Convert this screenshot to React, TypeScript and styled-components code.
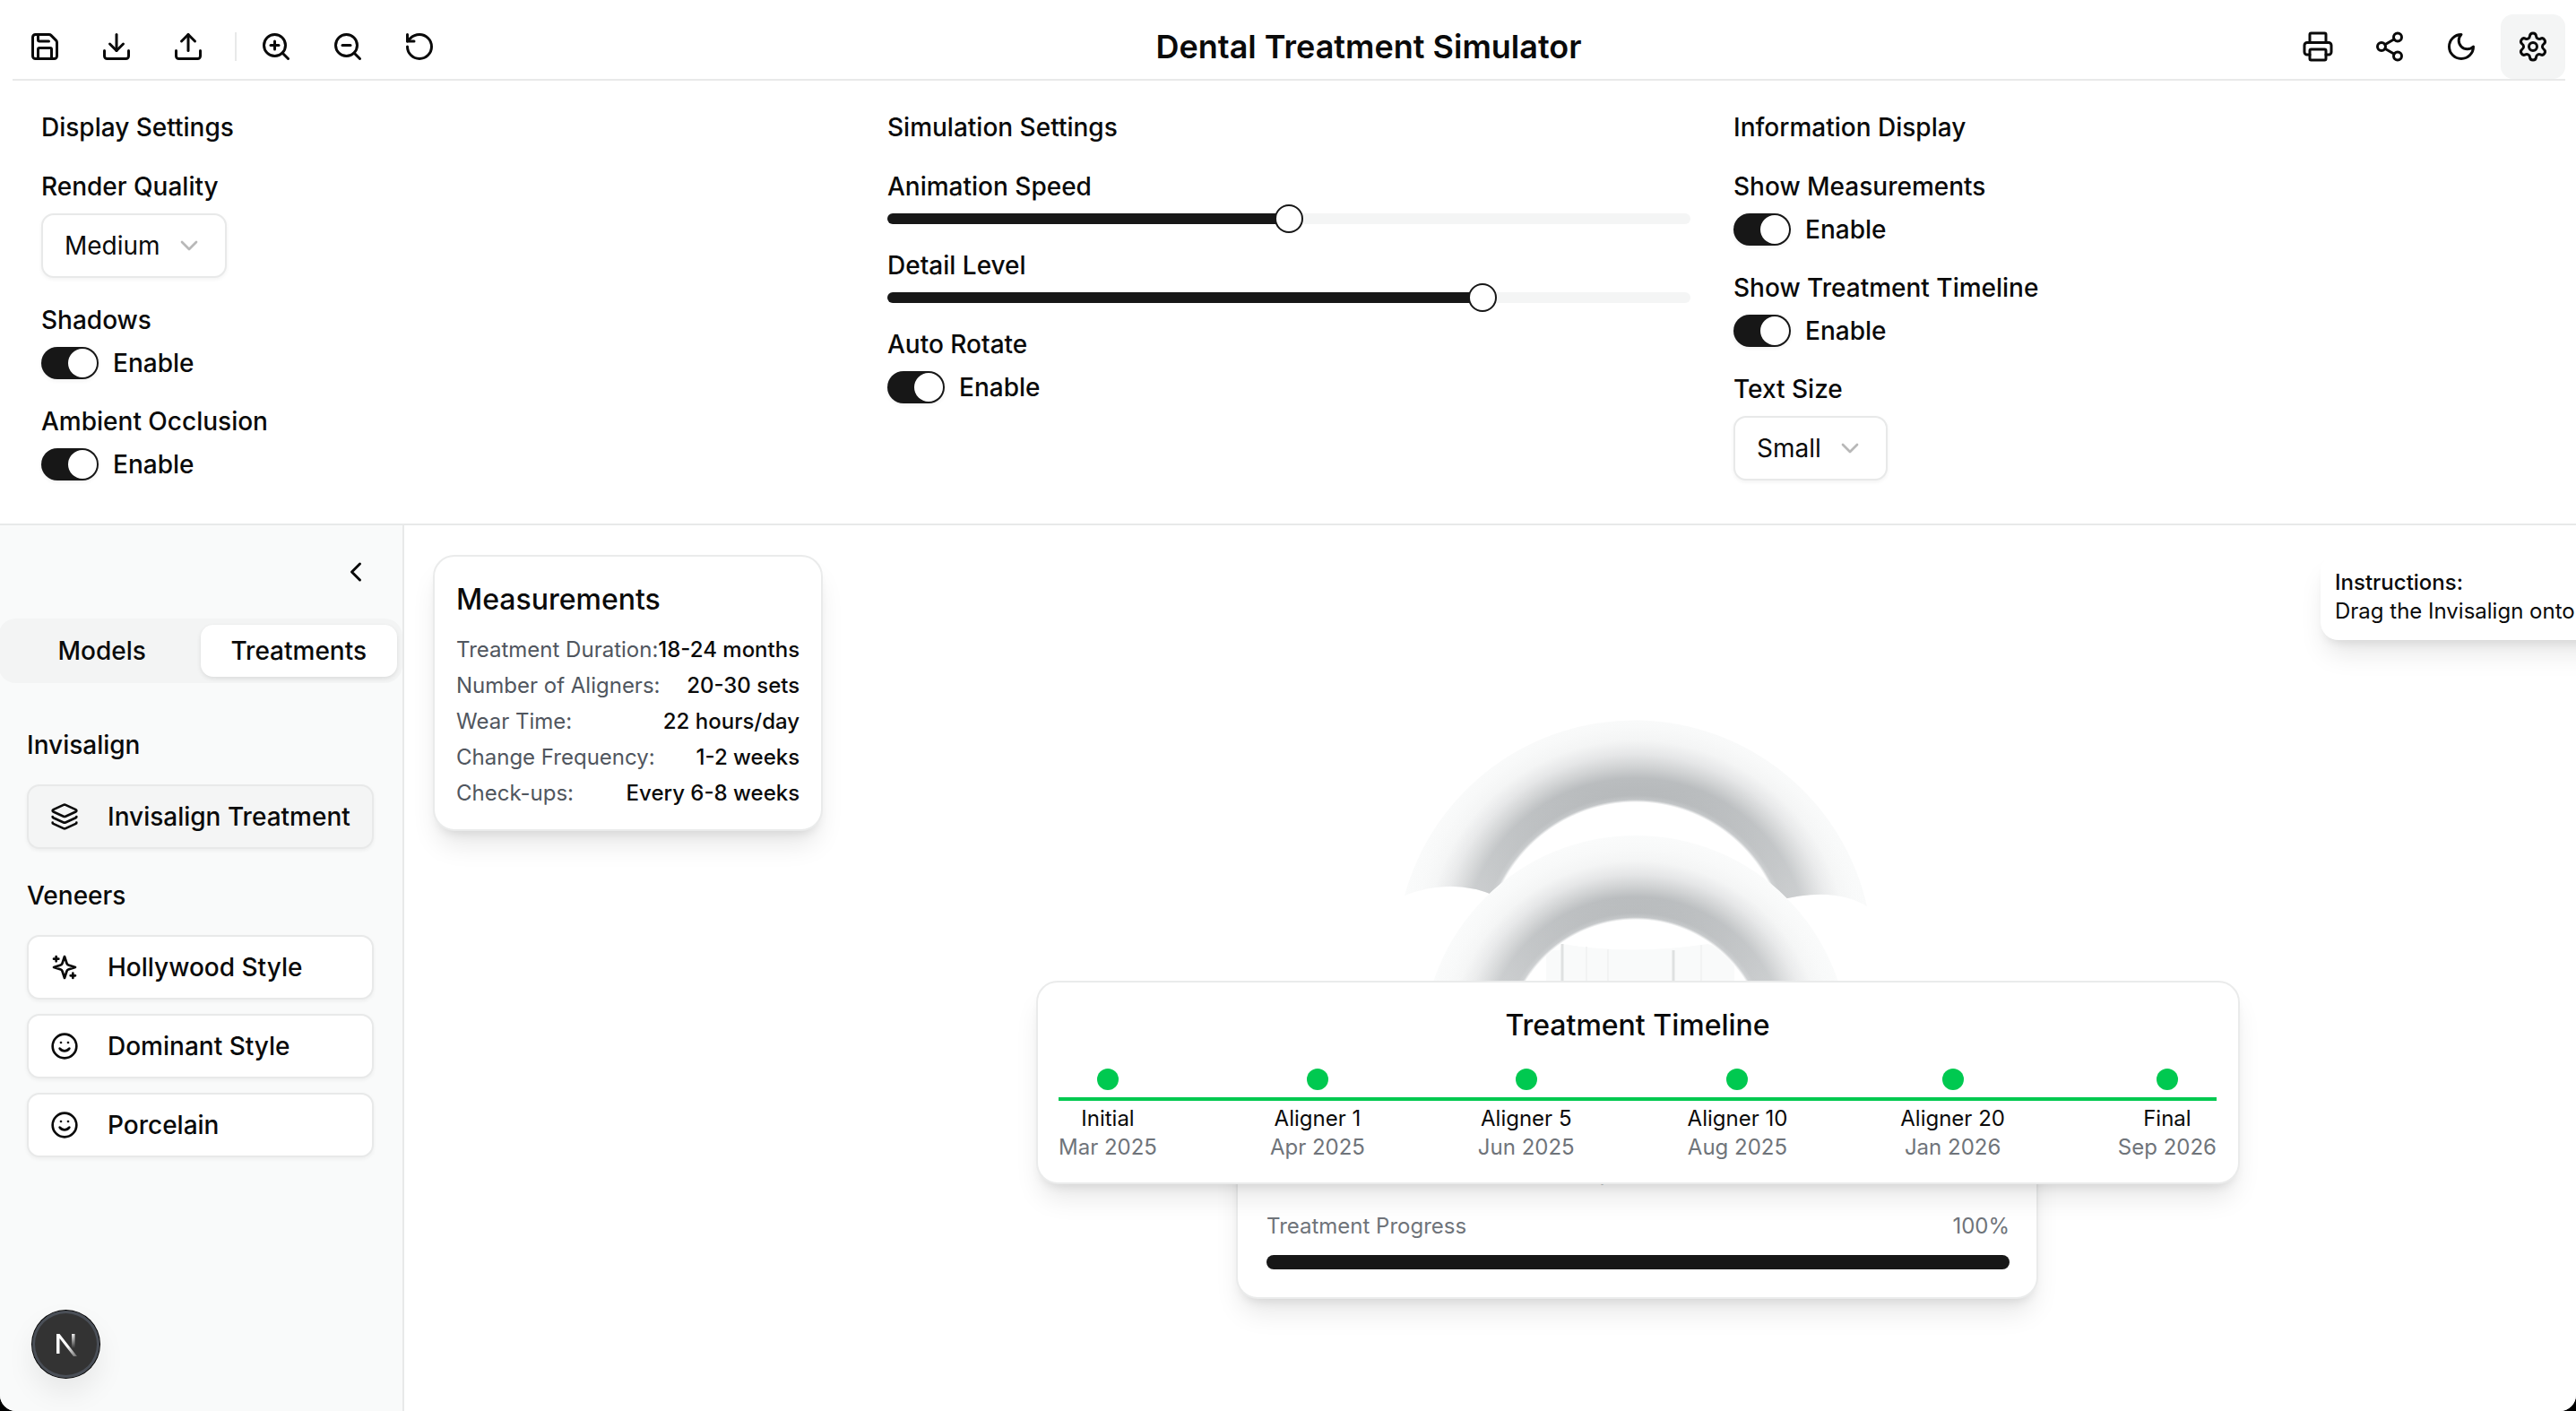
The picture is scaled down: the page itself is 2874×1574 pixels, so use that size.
import React from 'react';
import styled, { createGlobalStyle } from 'styled-components';
import {
  ChevronDown,
  ChevronLeft,
  Download,
  Layers,
  Printer,
  RotateCcw,
  Save,
  Settings,
  Share2,
  Smile,
  Upload,
  ZoomIn,
  ZoomOut,
} from 'lucide-react';

const GlobalStyle = createGlobalStyle`
  html, body {
    margin: 0;
    padding: 0;
    background: #000;
  }
  * {
    box-sizing: border-box;
  }
`;

const Page = styled.div`
  width: 2874px;
  height: 1574px;
  display: flex;
  flex-direction: column;
  overflow: hidden;
  position: relative;
  background: #fff;
  border-radius: 0 0 18px 18px;
  font-family: Inter, 'Noto Sans', sans-serif;
  font-size: 28px;
  line-height: 40px;
  color: #0a0a0a;
`;

const Header = styled.header`
  flex: none;
  height: 90px;
  margin: 0 12px 0 14px;
  padding-top: 16px;
  display: flex;
  align-items: center;
  justify-content: space-between;
  border-bottom: 2px solid #e8e9e9;
`;

const ToolGroup = styled.div`
  display: flex;
  align-items: center;
  gap: 8px;
`;

const ToolButton = styled.button<{ $active?: boolean }>`
  width: 72px;
  height: 72px;
  padding: 0;
  display: flex;
  align-items: center;
  justify-content: center;
  border: none;
  border-radius: 14px;
  color: #0a0a0a;
  background: ${(p) => (p.$active ? '#f4f5f5' : 'transparent')};
`;

const ToolDivider = styled.div`
  width: 2px;
  height: 32px;
  margin-left: 8px;
  background: #e8e9e9;
`;

const Title = styled.h1`
  margin: 0;
  font-size: 36px;
  line-height: 48px;
  font-weight: 600;
`;

const SettingsPanel = styled.section`
  flex: none;
  height: 496px;
  padding: 32px 44px 0 46px;
  display: grid;
  grid-template-columns: repeat(3, 1fr);
  column-gap: 48px;
  align-items: start;
  border-bottom: 2px solid #e8e9e9;
`;

const SettingsColumn = styled.div`
  display: flex;
  flex-direction: column;
  gap: 26px;
`;

const ColumnTitle = styled.h3`
  margin: 0 0 -1px;
  font-size: 28px;
  line-height: 40px;
  font-weight: 500;
`;

const Field = styled.div`
  display: flex;
  flex-direction: column;
  align-items: flex-start;
  gap: 9px;
`;

const FieldLabel = styled.label`
  line-height: 42px;
  font-weight: 500;
`;

const SelectBox = styled.div`
  height: 72px;
  padding: 0 24px;
  display: flex;
  align-items: center;
  gap: 16px;
  background: #fff;
  border: 2px solid #e8e9e9;
  border-radius: 14px;
  box-shadow: 0 2px 4px rgba(0, 0, 0, 0.05);
  svg {
    opacity: 0.5;
    color: #737373;
  }
`;

const ToggleRow = styled.div`
  display: flex;
  align-items: center;
  gap: 16px;
  height: 36px;
  font-weight: 500;
`;

const ToggleTrack = styled.span`
  width: 64px;
  height: 36px;
  padding: 2px;
  display: flex;
  justify-content: flex-end;
  border-radius: 18px;
  background: #171717;
  box-shadow: 0 2px 4px rgba(0, 0, 0, 0.05);
`;

const ToggleThumb = styled.span`
  width: 32px;
  height: 32px;
  border-radius: 50%;
  background: #fff;
`;

const SliderTrack = styled.div`
  position: relative;
  width: 100%;
  height: 12px;
  margin-bottom: -1px;
  border-radius: 6px;
  background: #f4f5f5;
`;

const SliderRange = styled.div<{ $value: number }>`
  height: 100%;
  width: calc((100% - 32px) * ${(p) => p.$value} + 16px);
  border-radius: 6px 0 0 6px;
  background: #171717;
`;

const SliderThumb = styled.span<{ $value: number }>`
  position: absolute;
  top: -10px;
  left: calc((100% - 32px) * ${(p) => p.$value});
  width: 32px;
  height: 32px;
  border-radius: 50%;
  background: #fff;
  border: 2px solid #171717;
`;

const Workspace = styled.main`
  flex: 1;
  min-height: 0;
  display: flex;
`;

const Sidebar = styled.aside`
  flex: none;
  width: 451px;
  padding-top: 16px;
  background: #f9fafa;
  border-right: 2px solid #e8e9e9;
`;

const CollapseRow = styled.div`
  height: 72px;
  padding-right: 16px;
  display: flex;
  justify-content: flex-end;
`;

const CollapseButton = styled.button`
  width: 72px;
  height: 72px;
  padding: 0;
  display: flex;
  align-items: center;
  justify-content: center;
  border: none;
  background: transparent;
  color: #0a0a0a;
`;

const TabList = styled.div`
  width: 451px;
  height: 72px;
  margin: 16px 0 0 -2px;
  padding: 7px 6px;
  display: grid;
  grid-template-columns: 1fr 1fr;
  border-radius: 20px;
  background: #f3f4f4;
`;

const Tab = styled.div<{ $active?: boolean }>`
  display: flex;
  align-items: center;
  justify-content: center;
  font-weight: 500;
  border-radius: 14px;
  background: ${(p) => (p.$active ? '#fff' : 'transparent')};
  box-shadow: ${(p) => (p.$active ? '0 2px 5px rgba(0, 0, 0, 0.1)' : 'none')};
`;

const TreatmentList = styled.div`
  padding: 49px 32px 0 30px;
`;

const GroupLabel = styled.h4<{ $spaced?: boolean }>`
  margin: ${(p) => (p.$spaced ? '32px' : '0')} 0 24px;
  font-size: 28px;
  line-height: 40px;
  font-weight: 500;
`;

const GroupItems = styled.div`
  display: flex;
  flex-direction: column;
  gap: 16px;
`;

const TreatmentItem = styled.div<{ $active?: boolean }>`
  height: 72px;
  padding-left: 24px;
  display: flex;
  align-items: center;
  gap: 32px;
  font-weight: 500;
  border: 2px solid #e8e9e9;
  border-radius: 14px;
  background: ${(p) => (p.$active ? '#f4f5f5' : '#fff')};
  box-shadow: 0 2px 4px rgba(0, 0, 0, 0.05);
`;

const Canvas = styled.div`
  position: relative;
  flex: 1;
  min-width: 0;
  overflow: hidden;
  background: #fff;
`;

const ArchDrawing = styled.svg`
  position: absolute;
  left: 849px;
  top: 174px;
`;

const FloatingCard = styled.div`
  position: absolute;
  background: #fff;
  border: 2px solid #eaebeb;
  border-radius: 24px;
  box-shadow: 0 20px 30px -6px rgba(0, 0, 0, 0.1), 0 8px 12px -6px rgba(0, 0, 0, 0.1);
`;

const MeasurementsCard = styled(FloatingCard)`
  left: 32px;
  top: 33px;
  padding: 24px 24px 20px;
  width: fit-content;
`;

const CardTitle = styled.h3<{ $center?: boolean }>`
  margin: 0;
  font-size: 32px;
  line-height: 48px;
  font-weight: 500;
  text-align: ${(p) => (p.$center ? 'center' : 'left')};
`;

const MeasureList = styled.div`
  margin-top: 12px;
  display: flex;
  flex-direction: column;
`;

const MeasureRow = styled.div`
  display: flex;
  justify-content: space-between;
  font-size: 24px;
  line-height: 40px;
  white-space: nowrap;
`;

const MeasureName = styled.span`
  color: #50565e;
`;

const MeasureValue = styled.span`
  font-weight: 500;
`;

const InstructionsCard = styled.div`
  position: absolute;
  left: 2138px;
  top: 32px;
  height: 96px;
  padding: 16px;
  background: #fff;
  border-radius: 20px;
  box-shadow: 0 20px 30px -6px rgba(0, 0, 0, 0.1), 0 8px 12px -6px rgba(0, 0, 0, 0.1);
  font-size: 24px;
  line-height: 32px;
  white-space: nowrap;
`;

const InstructionsTitle = styled.div`
  font-weight: 500;
`;

const ProgressCard = styled(FloatingCard)`
  left: 928px;
  top: 676px;
  width: 895px;
  height: 187px;
  padding: 24px 30px 24px 32px;
`;

const StageLine = styled.div`
  height: 36px;
  padding-right: 32px;
  font-size: 26px;
  line-height: 38px;
  font-weight: 500;
  text-align: center;
  white-space: nowrap;
`;

const ProgressRow = styled.div`
  margin-top: 28px;
  display: flex;
  justify-content: space-between;
  font-size: 24px;
  line-height: 32px;
  color: #6f747a;
`;

const ProgressBar = styled.div`
  height: 16px;
  margin-top: 16px;
  border-radius: 8px;
  background: #171717;
`;

const TimelineCard = styled(FloatingCard)`
  left: 705px;
  top: 508px;
  width: 1343px;
  height: 227px;
  padding: 24px 24px 22px 23px;
`;

const TimelineTrack = styled.div`
  position: relative;
  margin-top: 24px;
  display: flex;
  justify-content: space-between;
`;

const TimelineLine = styled.div`
  position: absolute;
  left: 0;
  right: 0;
  top: 32px;
  height: 4px;
  background: #00c950;
`;

const TimelineStep = styled.div`
  display: flex;
  flex-direction: column;
  align-items: center;
  font-size: 24px;
  line-height: 32px;
`;

const TimelineDot = styled.span`
  width: 24px;
  height: 24px;
  margin-bottom: 16px;
  border-radius: 50%;
  background: #00c950;
`;

const TimelineDate = styled.span`
  color: #6f747a;
`;

const DevBadge = styled.div`
  position: absolute;
  left: 36px;
  bottom: 37px;
  width: 75px;
  height: 75px;
  display: flex;
  align-items: center;
  justify-content: center;
  border-radius: 50%;
  background: #333;
  box-shadow: 0 0 0 1px #000, inset 0 0 0 3px #4a4f57, 0 16px 32px rgba(0, 0, 0, 0.08);
`;

const ringStops: [number, string][] = [
  [0, '#ffffff'],
  [0.03, '#c0c3c5'],
  [0.08, '#b6b9bb'],
  [0.27, '#babdbf'],
  [0.4, '#d0d2d3'],
  [0.54, '#e5e6e7'],
  [0.7, '#f4f5f5'],
  [0.85, '#f8f9f9'],
  [1, '#fafbfb'],
];

const RingGradient = ({
  id,
  cx,
  cy,
  inner,
  outer,
}: {
  id: string;
  cx: number;
  cy: number;
  inner: number;
  outer: number;
}) => (
  <radialGradient id={id} gradientUnits="userSpaceOnUse" cx={cx} cy={cy} r={outer}>
    {ringStops.map(([f, color]) => (
      <stop key={f} offset={(inner + f * (outer - inner)) / outer} stopColor={color} />
    ))}
  </radialGradient>
);

// washes the shading out towards the feet of an arch
const FootFade = ({ id, from, to }: { id: string; from: number; to: number }) => (
  <linearGradient id={id} gradientUnits="userSpaceOnUse" x1={0} y1={from} x2={0} y2={to}>
    <stop offset="0" stopColor="#fafbfb" stopOpacity="0" />
    <stop offset="1" stopColor="#fafbfb" stopOpacity="0.3" />
  </linearGradient>
);

const upperArch =
  'M1567 999 A266 266 0 0 1 2083 1011 Q2045 988 1982 1005 A167 167 0 0 0 1670 1000 Q1620 978 1567 999 Z';
const lowerArch = 'M1587 1170 A238 238 0 0 1 2063 1170 L1969 1170 A144 144 0 0 0 1681 1170 Z';

// aligner arches behind the overlays, coordinates are page pixels
const Arches = () => (
  <ArchDrawing width={1100} height={340} viewBox="1300 760 1100 340">
    <defs>
      <RingGradient id="upper" cx={1825} cy={1062} inner={167} outer={266} />
      <RingGradient id="lower" cx={1825} cy={1170} inner={144} outer={238} />
      <FootFade id="upperFade" from={880} to={1005} />
      <FootFade id="lowerFade" from={1000} to={1100} />
    </defs>
    <path d={upperArch} fill="url(#upper)" />
    <path d={upperArch} fill="url(#upperFade)" />
    <path d="M1725 1100 V1060 H1740 L1743 1053 Q1820 1066 1905 1053 L1935 1060 V1100 Z" fill="#f9fafa" />
    <path d="M1743 1053 V1100 M1867 1060 V1100" stroke="#dfe1e1" strokeWidth={3} fill="none" />
    <path d="M1770 1056 V1100 M1794 1059 V1100 M1898 1054 V1100" stroke="#f2f3f3" strokeWidth={2} fill="none" />
    <path d={lowerArch} fill="url(#lower)" />
    <path d={lowerArch} fill="url(#lowerFade)" />
  </ArchDrawing>
);

// older lucide outlines, the current package draws these two differently
const SparkleIcon = () => (
  <svg width={32} height={32} viewBox="0 0 24 24" fill="none" stroke="currentColor" strokeWidth={2} strokeLinecap="round" strokeLinejoin="round">
    <path d="m12 3-1.912 5.813a2 2 0 0 1-1.275 1.275L3 12l5.813 1.912a2 2 0 0 1 1.275 1.275L12 21l1.912-5.813a2 2 0 0 1 1.275-1.275L21 12l-5.813-1.912a2 2 0 0 1-1.275-1.275L12 3Z" />
    <path d="M5 3v4M19 17v4M3 5h4M17 19h4" />
  </svg>
);

const MoonIcon = () => (
  <svg width={36} height={36} viewBox="0 0 24 24" fill="none" stroke="currentColor" strokeWidth={2} strokeLinecap="round" strokeLinejoin="round">
    <path d="M12 3a6 6 0 0 0 9 9 9 9 0 1 1-9-9Z" />
  </svg>
);

const NextLogo = () => (
  <svg width={28} height={30} viewBox="0 0 28 30" fill="none">
    <defs>
      <linearGradient id="nDiagonal" x1="0" y1="0" x2="1" y2="1">
        <stop offset="0.55" stopColor="#fff" />
        <stop offset="1" stopColor="#fff" stopOpacity="0.25" />
      </linearGradient>
      <linearGradient id="nStem" x1="0" y1="0" x2="0" y2="1">
        <stop offset="0" stopColor="#fff" stopOpacity="0.9" />
        <stop offset="1" stopColor="#fff" stopOpacity="0" />
      </linearGradient>
    </defs>
    <path d="M3 3 H6.5 L26 28 H22 L6.5 8 V25 H3 Z" fill="url(#nDiagonal)" />
    <rect x="20" y="3" width="3.5" height="16" fill="url(#nStem)" />
  </svg>
);

const Toggle = () => (
  <ToggleRow>
    <ToggleTrack>
      <ToggleThumb />
    </ToggleTrack>
    Enable
  </ToggleRow>
);

const Slider = ({ value }: { value: number }) => (
  <SliderTrack>
    <SliderRange $value={value} />
    <SliderThumb $value={value} />
  </SliderTrack>
);

const Select = ({ value }: { value: string }) => (
  <SelectBox>
    {value}
    <ChevronDown size={32} />
  </SelectBox>
);

const measurements = [
  ['Treatment Duration:', '18-24 months'],
  ['Number of Aligners:', '20-30 sets'],
  ['Wear Time:', '22 hours/day'],
  ['Change Frequency:', '1-2 weeks'],
  ['Check-ups:', 'Every 6-8 weeks'],
];

const timeline = [
  ['Initial', 'Mar 2025'],
  ['Aligner 1', 'Apr 2025'],
  ['Aligner 5', 'Jun 2025'],
  ['Aligner 10', 'Aug 2025'],
  ['Aligner 20', 'Jan 2026'],
  ['Final', 'Sep 2026'],
];

const App = () => {
  return (
    <Page>
      <GlobalStyle />
      <Header>
        <ToolGroup>
          <ToolButton><Save size={36} /></ToolButton>
          <ToolButton><Download size={36} /></ToolButton>
          <ToolButton><Upload size={36} /></ToolButton>
          <ToolDivider />
          <ToolButton><ZoomIn size={36} /></ToolButton>
          <ToolButton><ZoomOut size={36} /></ToolButton>
          <ToolButton><RotateCcw size={36} /></ToolButton>
        </ToolGroup>
        <Title>Dental Treatment Simulator</Title>
        <ToolGroup>
          <ToolButton><Printer size={36} /></ToolButton>
          <ToolButton><Share2 size={36} /></ToolButton>
          <ToolButton><MoonIcon /></ToolButton>
          <ToolButton $active><Settings size={36} /></ToolButton>
        </ToolGroup>
      </Header>

      <SettingsPanel>
        <SettingsColumn>
          <ColumnTitle>Display Settings</ColumnTitle>
          <Field>
            <FieldLabel>Render Quality</FieldLabel>
            <Select value="Medium" />
          </Field>
          <Field>
            <FieldLabel>Shadows</FieldLabel>
            <Toggle />
          </Field>
          <Field>
            <FieldLabel>Ambient Occlusion</FieldLabel>
            <Toggle />
          </Field>
        </SettingsColumn>
        <SettingsColumn>
          <ColumnTitle>Simulation Settings</ColumnTitle>
          <Field>
            <FieldLabel>Animation Speed</FieldLabel>
            <Slider value={0.5} />
          </Field>
          <Field>
            <FieldLabel>Detail Level</FieldLabel>
            <Slider value={0.75} />
          </Field>
          <Field>
            <FieldLabel>Auto Rotate</FieldLabel>
            <Toggle />
          </Field>
        </SettingsColumn>
        <SettingsColumn>
          <ColumnTitle>Information Display</ColumnTitle>
          <Field>
            <FieldLabel>Show Measurements</FieldLabel>
            <Toggle />
          </Field>
          <Field>
            <FieldLabel>Show Treatment Timeline</FieldLabel>
            <Toggle />
          </Field>
          <Field>
            <FieldLabel>Text Size</FieldLabel>
            <Select value="Small" />
          </Field>
        </SettingsColumn>
      </SettingsPanel>

      <Workspace>
        <Sidebar>
          <CollapseRow>
            <CollapseButton><ChevronLeft size={36} /></CollapseButton>
          </CollapseRow>
          <TabList>
            <Tab>Models</Tab>
            <Tab $active>Treatments</Tab>
          </TabList>
          <TreatmentList>
            <GroupLabel>Invisalign</GroupLabel>
            <GroupItems>
              <TreatmentItem $active><Layers size={32} />Invisalign Treatment</TreatmentItem>
            </GroupItems>
            <GroupLabel $spaced>Veneers</GroupLabel>
            <GroupItems>
              <TreatmentItem><SparkleIcon />Hollywood Style</TreatmentItem>
              <TreatmentItem><Smile size={32} />Dominant Style</TreatmentItem>
              <TreatmentItem><Smile size={32} />Porcelain</TreatmentItem>
            </GroupItems>
          </TreatmentList>
        </Sidebar>

        <Canvas>
          <Arches />
          <MeasurementsCard>
            <CardTitle>Measurements</CardTitle>
            <MeasureList>
              {measurements.map(([name, value]) => (
                <MeasureRow key={name}>
                  <MeasureName>{name}</MeasureName>
                  <MeasureValue>{value}</MeasureValue>
                </MeasureRow>
              ))}
            </MeasureList>
          </MeasurementsCard>
          <InstructionsCard>
            <InstructionsTitle>Instructions:</InstructionsTitle>
            Drag the Invisalign onto the teeth to apply the treatment
          </InstructionsCard>
          <ProgressCard>
            <StageLine>Final stage: Complete</StageLine>
            <ProgressRow>
              <span>Treatment Progress</span>
              <span>100%</span>
            </ProgressRow>
            <ProgressBar />
          </ProgressCard>
          <TimelineCard>
            <CardTitle $center>Treatment Timeline</CardTitle>
            <TimelineTrack>
              <TimelineLine />
              {timeline.map(([label, date]) => (
                <TimelineStep key={label}>
                  <TimelineDot />
                  <span>{label}</span>
                  <TimelineDate>{date}</TimelineDate>
                </TimelineStep>
              ))}
            </TimelineTrack>
          </TimelineCard>
        </Canvas>
      </Workspace>

      <DevBadge>
        <NextLogo />
      </DevBadge>
    </Page>
  );
};

export default App;
